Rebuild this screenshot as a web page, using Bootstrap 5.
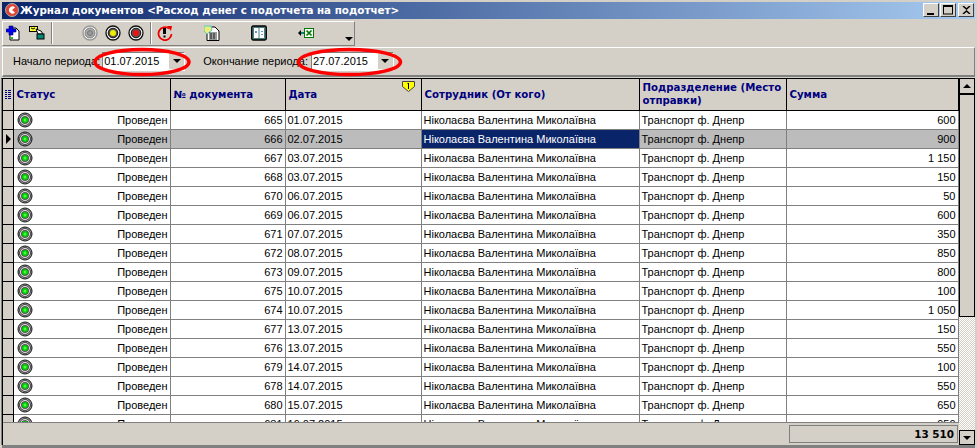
<!DOCTYPE html>
<html lang="uk">
<head>
<meta charset="utf-8">
<title>Журнал документов</title>
<link href="https://cdn.jsdelivr.net/npm/bootstrap@5.3.0/dist/css/bootstrap.min.css" rel="stylesheet">
<style>
html,body{height:100%;margin:0;overflow:hidden}
body{background:#d4d0c8;font-family:"Liberation Sans",Arial,sans-serif;font-size:11px;color:#000;line-height:1}
.win{position:relative;height:448px;width:977px;padding:2px 2px 0 1px}
.tbar{height:17px;margin-left:1px;background:linear-gradient(90deg,#0a246a,#a6caf0);color:#fff;font-family:"DejaVu Sans",sans-serif;font-weight:700;font-size:10.35px;padding:0 1px 0 3px;white-space:nowrap}
.tlogo{width:14px;height:14px;margin-right:1px}
.wbtn{width:16px;height:14px;background:#d4d0c8;border:1px solid;border-color:#fff #404040 #404040 #fff}
.wbtn+.wbtn{margin-left:1px}
.wbtn.gapx{margin-left:2px}
.tools{height:26px;width:353px;margin:2px 0 0 1px;border:1px solid;border-color:#fff #808080 #808080 #fff}
.sep{width:2px;height:22px;border-left:1px solid #808080;border-right:1px solid #fff}
.tico{width:16px;height:16px;flex:none}
.m3{margin-left:3px}.m5{margin-left:5px}.m6{margin-left:6px}.m7{margin-left:7px}.m29{margin-left:29px}.m31{margin-left:31px}
.tdrop{margin:12px 0 0 31px}
.filt{height:31px;border:1px solid;border-color:#fff #808080 #808080 #fff;border-bottom-width:2px;padding-left:10px;margin:1px 0 0 1px}
.lab2{margin-left:18px}
.dbox{width:83px;height:19px;background:#fff;border:1px solid;border-color:#808080 #fff #fff #808080;padding-left:1px;margin-left:2px}
.dbox2{margin-left:3px}
.dwrap{width:15px;height:15px;background:#d4d0c8;margin-left:auto}
.gridbox{height:367px;margin:1px 0 0 0;border-top:1px solid #000;border-left:1px solid #808080}
.ginner{border-left:1px solid #000;min-height:0}
.gleft{width:956px;min-width:0}
.gclip{height:343px;overflow:hidden;background:#fff}
.gtab{table-layout:fixed;border-collapse:collapse;width:955px}
.gtab th{height:31px;background:#d4d0c8;color:#00007f;font-family:"DejaVu Sans",sans-serif;font-weight:700;font-size:10.2px;line-height:13px;border:1px solid #000;border-top:0;padding:0 2px 0 3px;vertical-align:middle;position:relative}
.gtab th:first-child,.gtab td:first-child{border-left:0}
.gtab td{height:19px;border:1px solid #808080;padding:2px 2px 0;white-space:nowrap;overflow:hidden;background:#fff}
.gtab td.ind{background:#d4d0c8;border-color:#000;padding:0}
.gtab tr.cur td{background:#bcbcbc;border-top:1px dotted #222;border-bottom:1px dotted #222}
.gtab tr.cur td.ind{background:#d4d0c8;border-color:#000}
.gtab tr.cur td.sel{background:#0a246a;color:#fff}
.statc{display:flex;align-items:center;justify-content:space-between;padding-left:1px;height:14px;margin-top:-1px}
.statc svg{margin-top:-1px}
.arrow{width:0;height:0;border-top:5px solid transparent;border-bottom:5px solid transparent;border-left:5px solid #000;margin-left:3px}
.gflag{position:absolute;right:6px;top:2px;width:13px;height:11px}
.gfoot{height:23px;border-top:1px solid #808080;padding:2px 1px 2px 0}
.totbox{width:169px;height:18px;border:1px solid #808080;font-family:"DejaVu Sans",sans-serif;font-weight:700;padding-right:3px;font-size:10.4px}
.sbar{width:16px;background-image:repeating-conic-gradient(#d4d0c8 0 25%,#fff 0 50%);background-size:2px 2px}
.sbtn{width:16px;height:15px;background:#d4d0c8;border:1px solid #000}
.sbtn1{border-width:0 1px 2px 1px;height:16px}
.sthumb{width:16px;height:222px;background:#d4d0c8;border:1px solid #000;border-top:0}
.upa{border-left:4px solid transparent;border-right:4px solid transparent;border-bottom:4px solid #000}
.dna{border-left:4px solid transparent;border-right:4px solid transparent;border-top:4px solid #000}
.endrule{height:3px;background:#808080;margin-left:1px}
.ell{position:absolute;left:0;top:0;pointer-events:none}
</style>
</head>
<body>
<svg width="0" height="0" class="position-absolute">
<symbol id="lamp" viewBox="0 0 16 16">
<circle cx="8" cy="8" r="7" fill="#aaa" stroke="#111" stroke-width="1"/>
<circle cx="8" cy="8" r="5.4" fill="#fff" stroke="#333" stroke-width="1"/>
<circle cx="8" cy="8" r="4" fill="#555"/>
<circle cx="8" cy="8" r="3" fill="#0c0"/>
<circle cx="8" cy="8" r="1.5" fill="#4f4"/>
</symbol>
</svg>
<div class="win d-flex flex-column">
  <div class="tbar d-flex align-items-center">
    <svg class="tlogo" viewBox="0 0 14 14"><circle cx="7" cy="7" r="6.5" fill="#d43" stroke="#aaa"/><path d="M10 4.5A3.5 3.5 0 1 0 10 9.5L7 7z" fill="#fff"/></svg>
    <span>Журнал документов &lt;Расход денег с подотчета на подотчет&gt;</span>
    <div class="ms-auto d-flex">
      <div class="wbtn d-flex align-items-end justify-content-center"><svg width="8" height="10"><rect x="0" y="7" width="7" height="2"/></svg></div>
      <div class="wbtn d-flex align-items-center justify-content-center"><svg width="11" height="10"><rect x=".5" y="1" width="9" height="8" fill="none" stroke="#000"/><rect x="0" y="0" width="10" height="2"/></svg></div>
      <div class="wbtn gapx d-flex align-items-center justify-content-center"><svg width="9" height="8"><path d="M1 0l3.5 3L8 0M1 8l3.5-3L8 8" stroke="#000" stroke-width="1.5" fill="none"/></svg></div>
    </div>
  </div>
  <div class="tools d-flex align-items-center">
    <svg class="tico m3" viewBox="0 0 16 16"><path d="M4 3h6l3 3v9H4z" fill="#fff" stroke="#000"/><path d="M0 4h3V1h4v3h3v3H7v3H3V7H0z" fill="#00e" stroke="#006" stroke-width=".6"/><rect x="5" y="12" width="2" height="2" fill="#2b2"/></svg>
    <svg class="tico m7" viewBox="0 0 16 16"><rect x=".5" y="1.500" width="8" height="5" fill="#ff3" stroke="#000"/><path d="M2 3l2 1 2-1" stroke="#000" fill="none"/><path d="M7 4l5 2 2 3-5 0z" fill="#fff" stroke="#000"/><rect x="8" y="9" width="7" height="5" fill="#087" stroke="#000"/></svg>
    <div class="sep m6"></div>
    <svg class="tico m29" viewBox="0 0 16 16"><circle cx="8" cy="8" r="7" fill="#fff" stroke="#9a9a9a" stroke-width="1.500"/><circle cx="8" cy="8" r="5" fill="#aaa" stroke="#808080"/><circle cx="8" cy="8" r="2.500" fill="#999" stroke="#777"/></svg>
    <svg class="tico m7" viewBox="0 0 16 16"><circle cx="8" cy="8" r="7" fill="#fff" stroke="#111" stroke-width="1.300"/><circle cx="8" cy="8" r="4.800" fill="#555" stroke="#111"/><circle cx="8" cy="8" r="3" fill="#ee0"/></svg>
    <svg class="tico m7" viewBox="0 0 16 16"><circle cx="8" cy="8" r="7" fill="#fff" stroke="#111" stroke-width="1.300"/><circle cx="8" cy="8" r="4.800" fill="#555" stroke="#111"/><circle cx="8" cy="8" r="3" fill="#e11"/></svg>
    <div class="sep m6"></div>
    <svg class="tico m5" viewBox="0 0 16 16"><path d="M12 3.500A6.500 6.500 0 1 0 14.500 9" fill="none" stroke="#e00" stroke-width="1.800"/><path d="M10 1l5 0-1 5z" fill="#e00"/><rect x="6" y="3" width="3" height="6"/><rect x="6.500" y="10.500" width="2" height="2"/></svg>
    <svg class="tico m31" viewBox="0 0 16 16"><path d="M3 2h8l4 4v9.500H3z" fill="#fff" stroke="#000"/><path d="M0 1l7 0 1 4-5 4-3-3z" fill="#ee7" stroke="#5cc"/><path d="M5 8h8M5 10h8M5 12h8M5 14h8M7 8v6M10 8v6" stroke="#000" stroke-width=".8"/></svg>
    <svg class="tico m31" viewBox="0 0 16 16"><rect x=".7" y="1" width="14.600" height="14" rx="1.500" fill="#4b7d78" stroke="#000" stroke-width="1.300"/><rect x="3" y="3" width="4.500" height="10" fill="#fff"/><rect x="8.500" y="3" width="4.500" height="10" fill="#fff"/><path d="M5 6v2M11 6v1M11 9v1" stroke="#06c" stroke-width="1.300"/></svg>
    <svg class="tico m31" viewBox="0 0 16 16"><path d="M0 8l3-3v6z"/><rect x="3" y="7" width="3" height="2" fill="#087"/><rect x="6.500" y="3.500" width="9" height="9" fill="#fff" stroke="#070"/><path d="M8.500 5.500l5 5M13.500 5.500l-5 5" stroke="#070" stroke-width="1.700"/></svg>
    <div class="dna tdrop"></div>
  </div>
  <div class="filt d-flex align-items-center">
    <span>Начало периода:</span>
    <div class="dbox d-flex align-items-center"><span>01.07.2015</span><div class="dwrap d-flex align-items-center justify-content-center"><div class="dna"></div></div></div>
    <span class="lab2">Окончание периода:</span>
    <div class="dbox dbox2 d-flex align-items-center"><span>27.07.2015</span><div class="dwrap d-flex align-items-center justify-content-center"><div class="dna"></div></div></div>
  </div>
  <div class="gridbox d-flex">
    <div class="ginner d-flex flex-fill">
    <div class="gleft d-flex flex-column">
      <div class="gclip">
        <table class="gtab">
          <colgroup><col style="width:10px"><col style="width:157px"><col style="width:115px"><col style="width:136px"><col style="width:218px"><col style="width:147px"><col style="width:172px"></colgroup>
          <thead><tr>
            <th class="p-0 text-center"><svg width="6" height="11"><path d="M0 1.500h2M0 3.500h2M0 5.500h2M0 7.500h2M0 9.500h2M3 1.500h3M3 3.500h3M3 5.500h3M3 7.500h3M3 9.500h3" stroke="#00007f"/></svg></th>
            <th>Статус</th><th>№ документа</th>
            <th>Дата<svg class="gflag" viewBox="0 0 13 11"><path d="M.5.5h12v5l-6 5-6-5z" fill="#ff0" stroke="#444"/><path d="M5.500 3l1-1v6" stroke="#000" fill="none"/></svg></th>
            <th>Сотрудник (От кого)</th><th>Подразделение (Место отправки)</th><th>Сумма</th>
          </tr></thead>
          <tbody>
<tr><td class="ind"></td><td><div class="statc"><svg width="16" height="16"><use href="#lamp"/></svg>Проведен</div></td><td class="text-end">665</td><td>01.07.2015</td><td>Ніколаєва Валентина Миколаївна</td><td>Транспорт ф. Днепр</td><td class="text-end">600</td></tr>
<tr class="cur"><td class="ind"><div class="arrow"></div></td><td><div class="statc"><svg width="16" height="16"><use href="#lamp"/></svg>Проведен</div></td><td class="text-end">666</td><td>02.07.2015</td><td class="sel">Ніколаєва Валентина Миколаївна</td><td>Транспорт ф. Днепр</td><td class="text-end">900</td></tr>
<tr><td class="ind"></td><td><div class="statc"><svg width="16" height="16"><use href="#lamp"/></svg>Проведен</div></td><td class="text-end">667</td><td>03.07.2015</td><td>Ніколаєва Валентина Миколаївна</td><td>Транспорт ф. Днепр</td><td class="text-end">1 150</td></tr>
<tr><td class="ind"></td><td><div class="statc"><svg width="16" height="16"><use href="#lamp"/></svg>Проведен</div></td><td class="text-end">668</td><td>03.07.2015</td><td>Ніколаєва Валентина Миколаївна</td><td>Транспорт ф. Днепр</td><td class="text-end">150</td></tr>
<tr><td class="ind"></td><td><div class="statc"><svg width="16" height="16"><use href="#lamp"/></svg>Проведен</div></td><td class="text-end">670</td><td>06.07.2015</td><td>Ніколаєва Валентина Миколаївна</td><td>Транспорт ф. Днепр</td><td class="text-end">50</td></tr>
<tr><td class="ind"></td><td><div class="statc"><svg width="16" height="16"><use href="#lamp"/></svg>Проведен</div></td><td class="text-end">669</td><td>06.07.2015</td><td>Ніколаєва Валентина Миколаївна</td><td>Транспорт ф. Днепр</td><td class="text-end">600</td></tr>
<tr><td class="ind"></td><td><div class="statc"><svg width="16" height="16"><use href="#lamp"/></svg>Проведен</div></td><td class="text-end">671</td><td>07.07.2015</td><td>Ніколаєва Валентина Миколаївна</td><td>Транспорт ф. Днепр</td><td class="text-end">350</td></tr>
<tr><td class="ind"></td><td><div class="statc"><svg width="16" height="16"><use href="#lamp"/></svg>Проведен</div></td><td class="text-end">672</td><td>08.07.2015</td><td>Ніколаєва Валентина Миколаївна</td><td>Транспорт ф. Днепр</td><td class="text-end">850</td></tr>
<tr><td class="ind"></td><td><div class="statc"><svg width="16" height="16"><use href="#lamp"/></svg>Проведен</div></td><td class="text-end">673</td><td>09.07.2015</td><td>Ніколаєва Валентина Миколаївна</td><td>Транспорт ф. Днепр</td><td class="text-end">800</td></tr>
<tr><td class="ind"></td><td><div class="statc"><svg width="16" height="16"><use href="#lamp"/></svg>Проведен</div></td><td class="text-end">675</td><td>10.07.2015</td><td>Ніколаєва Валентина Миколаївна</td><td>Транспорт ф. Днепр</td><td class="text-end">100</td></tr>
<tr><td class="ind"></td><td><div class="statc"><svg width="16" height="16"><use href="#lamp"/></svg>Проведен</div></td><td class="text-end">674</td><td>10.07.2015</td><td>Ніколаєва Валентина Миколаївна</td><td>Транспорт ф. Днепр</td><td class="text-end">1 050</td></tr>
<tr><td class="ind"></td><td><div class="statc"><svg width="16" height="16"><use href="#lamp"/></svg>Проведен</div></td><td class="text-end">677</td><td>13.07.2015</td><td>Ніколаєва Валентина Миколаївна</td><td>Транспорт ф. Днепр</td><td class="text-end">150</td></tr>
<tr><td class="ind"></td><td><div class="statc"><svg width="16" height="16"><use href="#lamp"/></svg>Проведен</div></td><td class="text-end">676</td><td>13.07.2015</td><td>Ніколаєва Валентина Миколаївна</td><td>Транспорт ф. Днепр</td><td class="text-end">550</td></tr>
<tr><td class="ind"></td><td><div class="statc"><svg width="16" height="16"><use href="#lamp"/></svg>Проведен</div></td><td class="text-end">679</td><td>14.07.2015</td><td>Ніколаєва Валентина Миколаївна</td><td>Транспорт ф. Днепр</td><td class="text-end">100</td></tr>
<tr><td class="ind"></td><td><div class="statc"><svg width="16" height="16"><use href="#lamp"/></svg>Проведен</div></td><td class="text-end">678</td><td>14.07.2015</td><td>Ніколаєва Валентина Миколаївна</td><td>Транспорт ф. Днепр</td><td class="text-end">550</td></tr>
<tr><td class="ind"></td><td><div class="statc"><svg width="16" height="16"><use href="#lamp"/></svg>Проведен</div></td><td class="text-end">680</td><td>15.07.2015</td><td>Ніколаєва Валентина Миколаївна</td><td>Транспорт ф. Днепр</td><td class="text-end">650</td></tr>
<tr><td class="ind"></td><td><div class="statc"><svg width="16" height="16"><use href="#lamp"/></svg>Проведен</div></td><td class="text-end">681</td><td>16.07.2015</td><td>Ніколаєва Валентина Миколаївна</td><td>Транспорт ф. Днепр</td><td class="text-end">950</td></tr>
          </tbody>
        </table>
      </div>
      <div class="gfoot d-flex justify-content-end"><div class="totbox d-flex align-items-center justify-content-end">13 510</div></div>
    </div>
    <div class="sbar d-flex flex-column">
      <div class="sbtn sbtn1 d-flex align-items-center justify-content-center"><div class="upa"></div></div>
      <div class="sthumb"></div>
      <div class="sbtn mt-auto d-flex align-items-center justify-content-center"><div class="dna"></div></div>
    </div>
    </div>
  </div>
  <div class="endrule"></div>
  <svg class="ell" width="977" height="90">
    <ellipse cx="142" cy="62" rx="47" ry="12.500" fill="none" stroke="#f00" stroke-width="3.500"/>
    <ellipse cx="349.500" cy="62" rx="51" ry="12.500" fill="none" stroke="#f00" stroke-width="3.500"/>
  </svg>
</div>
<script src="https://cdn.jsdelivr.net/npm/bootstrap@5.3.0/dist/js/bootstrap.bundle.min.js"></script>
</body>
</html>
